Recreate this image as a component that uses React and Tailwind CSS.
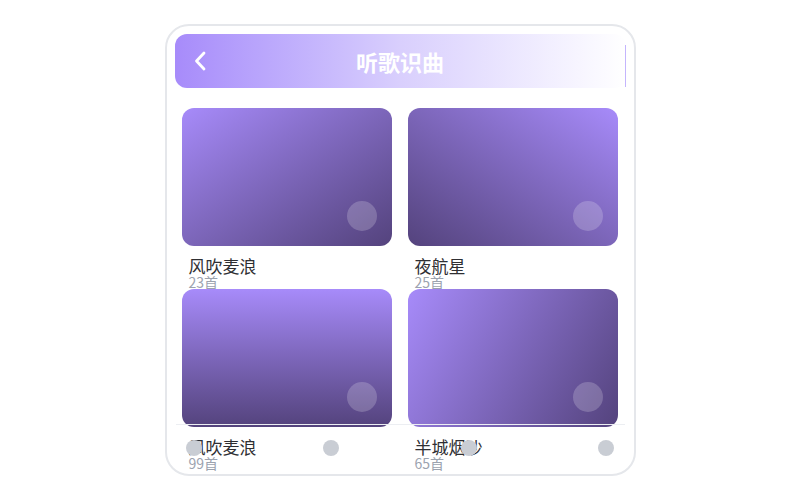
const playlists = [
  { name: '风吹麦浪', count: '23首', grad: 'bg-linear-to-br' },
  { name: '夜航星', count: '25首', grad: 'bg-linear-to-bl' },
  { name: '风吹麦浪', count: '99首', grad: 'bg-linear-to-b' },
  { name: '半城烟沙', count: '65首', grad: 'bg-linear-[120deg]' },
]

function PlaylistCard({ item }) {
  return (
    <div className="flex flex-col">
      <div className={`relative h-[138px] rounded-xl ${item.grad} from-[#a78bfa] to-[#54437d]`}>
        <div className="absolute right-[15px] bottom-[15px] w-[30px] h-[30px] rounded-full bg-white/20" />
      </div>
      <div className="mt-[10px] px-[7px] text-[17px] leading-[19px] text-[#2f2f33]">{item.name}</div>
      <div className="px-[7px] text-[14px] leading-[14px] text-[#9ca3af]">{item.count}</div>
    </div>
  )
}

export default function App() {
  return (
    <div
      className="w-[800px] h-[500px] bg-white pt-6"
      style={{ fontFamily: '"Noto Sans CJK SC", "Noto Sans", sans-serif' }}
    >
      <div className="relative mx-auto w-[471px] h-[452px] rounded-3xl border-2 border-[#e5e7eb] overflow-hidden px-2 pt-2">
        {/* Header */}
        <div className="relative flex items-center justify-center h-[54px] rounded-xl bg-linear-to-r from-[#a78bfa] via-[#d9cffd] to-white">
          <svg className="absolute left-[18px]" width="14" height="20" viewBox="0 0 14 20" fill="none">
            <path d="M11 2 L3.5 10 L11 18" stroke="white" strokeWidth="2.8" strokeLinecap="round" strokeLinejoin="round" />
          </svg>
          <h1 className="text-[22px] font-bold text-white">听歌识曲</h1>
          <div className="absolute right-0 top-[11px] h-[42px] w-[1px] bg-[#c4b5fd]" />
        </div>

        {/* Grid */}
        <div className="grid grid-cols-2 gap-x-4 mt-5 pl-[7px] pr-2">
          {playlists.map((p, i) => (
            <PlaylistCard key={i} item={p} />
          ))}
        </div>

        {/* Bottom nav overlay */}
        <div className="absolute left-[9px] right-[9px] top-[398px] h-[46px] border-t border-[#eceef2] flex items-center justify-between px-[10px]">
          {[0, 1, 2, 3].map((d) => (
            <div key={d} className="w-4 h-4 rounded-full bg-[#c9cdd4]" />
          ))}
        </div>
      </div>
    </div>
  )
}
